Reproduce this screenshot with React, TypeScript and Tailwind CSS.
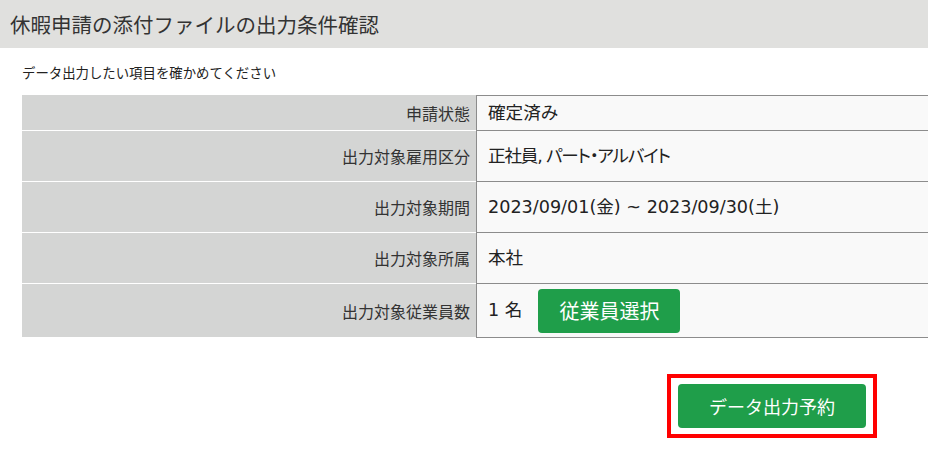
import React from 'react';

interface Row {
  label: string;
  value: React.ReactNode;
  height: string;
}

const font = { fontFamily: '"Noto Sans CJK JP", "Noto Sans", sans-serif' };

export default function App() {
  const rows: Row[] = [
    { label: '申請状態', value: '確定済み', height: 'h-[36px]' },
    {
      label: '出力対象雇用区分',
      value: <span className="tracking-[-1.2px] [font-feature-settings:'palt']">正社員, パート・アルバイト</span>,
      height: 'h-[51px]',
    },
    { label: '出力対象期間', value: '2023/09/01(金) ~ 2023/09/30(土)', height: 'h-[51px]' },
    { label: '出力対象所属', value: '本社', height: 'h-[51px]' },
    {
      label: '出力対象従業員数',
      value: (
        <div className="flex items-center">
          <span>1 名</span>
          <button
            className="ml-[16px] h-[44px] w-[142px] rounded-[4px] bg-[#1f9e4a] text-[20px] text-white"
            style={font}
          >
            従業員選択
          </button>
        </div>
      ),
      height: 'h-[54px]',
    },
  ];

  return (
    <div className="min-h-[452px] w-[928px] overflow-hidden bg-white text-[#222]" style={font}>
      {/* header */}
      <div className="flex h-[48px] items-center bg-[#e0e0de] pl-[10px]">
        <h1 className="text-[20.5px] font-normal text-[#333]">休暇申請の添付ファイルの出力条件確認</h1>
      </div>

      <div className="pl-[22px]">
        <p className="pt-[14px] text-[13.4px] leading-[20px] text-[#222]">データ出力したい項目を確かめてください</p>

        <div className="mt-[13px] flex flex-col">
          {rows.map((row, i) => (
            <div key={row.label} className={`flex ${row.height}`}>
              <div className="flex w-[454px] items-center justify-end border-b border-white bg-[#d4d5d4] pr-[6px] text-[16px] text-[#333]">
                {row.label}
              </div>
              <div
                className={`flex flex-1 items-center border-b border-l border-[#8c8c8c] bg-[#f9f9f9] pl-[11px] font-['DejaVu_Sans','Noto_Sans_CJK_JP',sans-serif] text-[17.6px] ${
                  i === 0 ? 'border-t' : ''
                }`}
              >
                {row.value}
              </div>
            </div>
          ))}
        </div>
      </div>

      {/* submit */}
      <div className="mt-[36px] flex justify-end pr-[51px]">
        <div className="border-4 border-[#ff0000] px-[7px] py-[6px]">
          <button className="h-[44px] w-[188px] rounded-[4px] bg-[#1f9e4a] text-[18px] text-white">データ出力予約</button>
        </div>
      </div>
    </div>
  );
}
